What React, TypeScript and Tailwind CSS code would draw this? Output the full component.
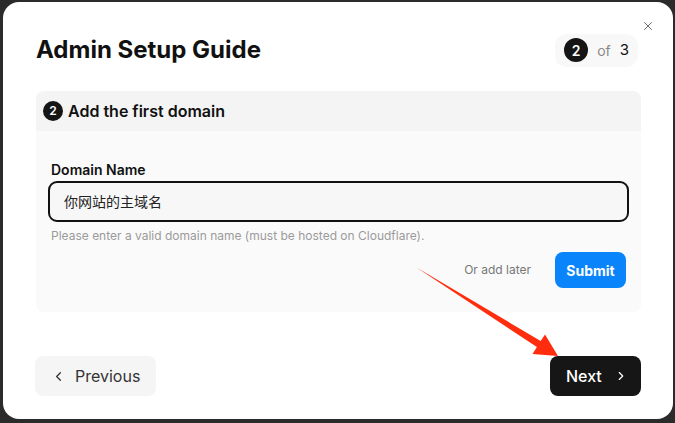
import React from "react";
import { ChevronLeft, ChevronRight, X } from "lucide-react";

// Red annotation arrow pointing at the Next button
function PointerArrow() {
	return (
		<svg className="pointer-events-none absolute left-0 top-0" width="675" height="423" viewBox="0 0 675 423">
			<polygon points="415,266.5 416.5,267.5 540.7,341 545,334.5 558,356 532.5,354 536.9,347" fill="#ff2d0d" />
		</svg>
	);
}

export default function App() {
	return (
		<div
			className="relative h-[423px] w-[675px] overflow-hidden bg-[#2b2b2b] pb-[4px] pl-[3px] pr-[2px] pt-[2px]"
			style={{ fontFamily: "Inter, 'Noto Sans CJK SC', sans-serif" }}
		>
			<div className="relative flex h-full flex-col rounded-2xl bg-white pl-[33px] pr-[32px]">
				{/* Close */}
				<button className="absolute right-[18px] top-[17px] text-[#555]">
					<X size={14} strokeWidth={1.5} />
				</button>

				{/* Header */}
				<div className="mt-[31px] flex h-[34px] items-center justify-between">
					<h1 className="text-[24px] font-bold leading-8 text-[#111]">Admin Setup Guide</h1>
					<div className="mr-[3px] flex h-[33px] items-center gap-[9px] rounded-xl bg-[#f8f8f8] pl-[9px] pr-[9px] text-[14px]">
						<span className="flex h-6 w-6 items-center justify-center rounded-full bg-[#151515] text-[14px] font-semibold text-white">
							2
						</span>
						<span className="text-[#8a8a8a]">of</span>
						<span className="text-[15px] text-[#111]">3</span>
					</div>
				</div>

				{/* Step card */}
				<div className="mt-[24px] flex flex-col">
					<div className="flex h-[40px] items-center gap-[5px] rounded-t-lg bg-[#f4f4f4] pl-[7px]">
						<span className="flex h-5 w-5 items-center justify-center rounded-full bg-[#151515] text-[12px] font-semibold text-white">
							2
						</span>
						<span className="text-[16px] font-semibold text-[#111]">Add the first domain</span>
					</div>
					<div className="flex flex-col rounded-b-lg bg-[#fafafa] px-[15px] pb-[24px] pt-[29px]">
						<label className="text-[14px] font-semibold leading-5 text-[#111]">Domain Name</label>
						<div className="-mx-[3px] mt-[1px] flex h-[41px] items-center rounded-[9px] border-2 border-[#111] bg-[#f7f7f7] pl-[14px] text-[14px] text-[#222]">
							你网站的主域名
						</div>
						<p className="mt-[6px] text-[12px] leading-4 text-[#9a9a9a]">
							Please enter a valid domain name (must be hosted on Cloudflare).
						</p>
						<div className="mt-[8px] flex items-center justify-end gap-[24px]">
							<span className="text-[12px] text-[#777]">Or add later</span>
							<button className="h-[36px] w-[71px] rounded-lg bg-[#0a84fb] text-[14px] font-bold text-white">
								Submit
							</button>
						</div>
					</div>
				</div>

				{/* Footer navigation */}
				<div className="mt-[44px] flex items-center justify-between">
					<button className="-ml-[1px] flex h-[40px] w-[121px] items-center gap-[9px] rounded-lg bg-[#f5f5f5] pl-[16px] text-[16px] text-[#333]">
						<ChevronLeft size={15} strokeWidth={2} />
						Previous
					</button>
					<button className="flex h-[40px] w-[91px] items-center gap-[12px] rounded-lg bg-[#161616] pl-[16px] text-[16px] font-medium text-white">
						Next
						<ChevronRight size={14} strokeWidth={2} />
					</button>
				</div>
			</div>
			<PointerArrow />
		</div>
	);
}
